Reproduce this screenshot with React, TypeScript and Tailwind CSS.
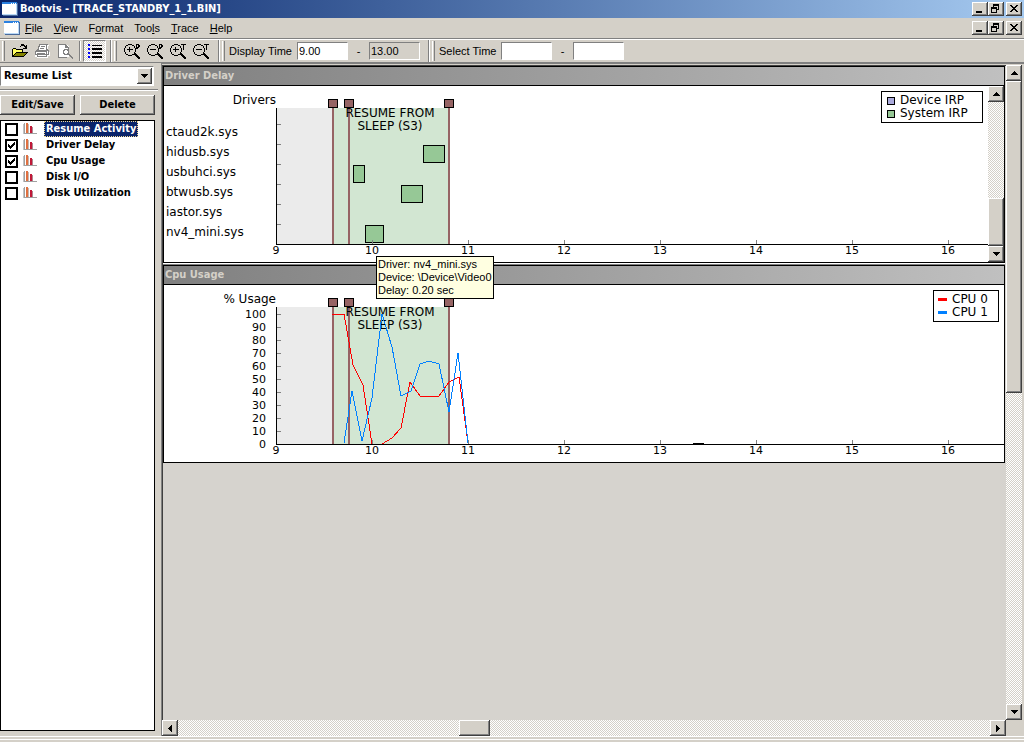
import React from "react";

const raised =
  "bg-[#d4d0c8] shadow-[inset_-1px_-1px_#404040,inset_1px_1px_#ffffff,inset_-2px_-2px_#808080]";
const dither =
  "bg-[conic-gradient(#ffffff_25%,#d4d0c8_0_50%,#ffffff_0_75%,#d4d0c8_0)] bg-[length:2px_2px]";
const chartFont = "font-['DejaVu_Sans',sans-serif]";

function WindowGlyph() {
  return (
    <svg width="16" height="14" shapeRendering="crispEdges" aria-hidden="true">
      <rect x="1" y="1" width="15" height="13" fill="#4a6a9a" />
      <rect x="0" y="0" width="15" height="13" fill="#b8d8f8" />
      <rect x="0" y="0" width="15" height="2" fill="#2a80e0" />
      <rect x="0" y="2" width="14" height="10" fill="#ffffff" />
      <path d="M9 1h1v1h-1zM11 1h1v1h-1zM13 1h1v1h-1z" fill="#ffffff" />
    </svg>
  );
}

function WindowButtons() {
  const cls = `flex h-[14px] w-4 items-center justify-center ${raised}`;
  return (
    <div className="ml-auto flex pr-[2px]">
      <button aria-label="Minimize" className={cls}>
        <svg width="16" height="14" shapeRendering="crispEdges"><path d="M4 9h6v2H4z" /></svg>
      </button>
      <button aria-label="Restore" className={cls}>
        <svg width="16" height="14" shapeRendering="crispEdges">
          <path d="M5 2h6v6h-2v-1h1v-3h-4v1h-1z" />
          <path fillRule="evenodd" d="M3 5h6v6h-6zM4 7v3h4v-3z" />
        </svg>
      </button>
      <button aria-label="Close" className={`ml-[2px] ${cls}`}>
        <svg width="16" height="14" shapeRendering="crispEdges">
          <path d="M4 3h2v1h1v1h2v-1h1v-1h2v1h-1v1h-1v1h-1v1h1v1h1v1h1v1h-2v-1h-1v-1h-2v1h-1v1h-2v-1h1v-1h1v-1h1v-1h-1v-1h-1v-1h-1z" />
        </svg>
      </button>
    </div>
  );
}

function Arrow({ dir }: { dir: "up" | "down" | "left" | "right" }) {
  const paths = {
    up: "M3 0h1v1h1v1h1v1h1v1H0v-1h1v-1h1v-1h1z",
    down: "M0 0h7v1h-1v1h-1v1h-1v1h-1v-1h-1v-1h-1v-1H0z",
    left: "M3 0h1v7h-1v-1h-1v-1h-1v-1H0v-1h1v-1h1v-1h1z",
    right: "M0 0h1v1h1v1h1v1h1v1h-1v1h-1v1h-1v1H0z",
  };
  const flat = dir === "up" || dir === "down";
  return (
    <svg width={flat ? 7 : 4} height={flat ? 4 : 7} shapeRendering="crispEdges" aria-hidden="true">
      <path d={paths[dir]} />
    </svg>
  );
}

function ScrollButton({ dir }: { dir: "up" | "down" | "left" | "right" }) {
  return (
    <button aria-label={`Scroll ${dir}`} className={`flex size-4 shrink-0 items-center justify-center ${raised}`}>
      <Arrow dir={dir} />
    </button>
  );
}

function Grip() {
  return <div className="h-5 w-[3px] shrink-0 border-l border-white border-r border-r-[#808080] bg-[#d4d0c8]" />;
}

function BandEdge() {
  return <div className="h-full w-[2px] shrink-0 border-l border-l-[#808080] border-r border-r-white" />;
}

function ZoomIcon({ sign, mark }: { sign: "+" | "-"; mark: "P" | "T" }) {
  return (
    <svg width="18" height="17" shapeRendering="crispEdges" aria-hidden="true">
      <path d="M4 1h4v1H4zM2 2h2v1H2zM8 2h2v1H8zM1 3h1v2H1zM10 3h1v2h-1zM0 5h1v4H0zM11 5h1v4h-1zM1 9h1v2H1zM10 9h1v2h-1zM2 11h2v1H2zM8 11h2v1H8zM4 12h4v1H4z" />
      <path d="M3 6h6v1H3z" />
      {sign === "+" && <path d="M5 4h1v5H5z" />}
      <path d="M10 10h1v1h1v1h1v1h1v1h1v1h1v1h-2v-1h-1v-1h-1v-1h-1v-1h-1z" />
      <path d="M11 10h1v1h1v1h1v1h1v1h1v2h-2v-1h-1v-1h-1v-1h-1z" />
      {mark === "P" ? (
        <path fillRule="evenodd" d="M12 1h3v1h1v2h-1v1h-1v1h-2zM13 2v2h1v-2z" />
      ) : (
        <path d="M11 1h5v1h-2v5h-1v-5h-2z" />
      )}
    </svg>
  );
}

function Toolbar() {
  const field =
    "h-[18px] w-[51px] border border-[#808080] border-r-white border-b-white px-[1px] text-[11px] leading-4 outline-none";
  return (
    <div className="flex h-[23px] items-center border-t border-white text-[11px]">
      <div className="ml-[2px] mr-[6px]"><Grip /></div>
      <button aria-label="Open" className="mr-[6px]">
        <svg width="17" height="16" shapeRendering="crispEdges">
          <path d="M10 1h3v1h1v1h1v-1h1v4h-4v-1h2v-1h-1v-1h-3v1h-1v-1h1z" />
          <path d="M2 5h3v1h7v3h5v1h-1v1h-1v1h-1v1h-1v1H1V6h1z" />
          <path d="M2 6h3v1h6v2H5v1H4v1H3v1H2z" fill="#ffff60" />
          <path d="M6 10h9v1h-1v1h-1v1H3v-1h1v-1h1v-1z" fill="#848400" />
        </svg>
      </button>
      <button aria-label="Print" disabled className="mr-[6px]">
        <svg width="17" height="16" shapeRendering="crispEdges">
          <path d="M6 2h9v1h-1v5h1v1h1v4h-2v2H3v-1H1V9h1V8h2V6h1V4h1z" fill="#fff" />
          <path
            fill="#808080"
            fillRule="evenodd"
            d="M5 1h9v1h-1v4h1v1h1v5h-2v2H3v-2H1V8h1V7h1V6h1V3h1zM6 2v2H5v3h7V2zM2 8v3h10V8zM4 12v1h8v-1zM13 8v3h1V8z"
          />
          <path fill="#808080" d="M7 3h4v1H7zM6 5h4v1H6zM2 8h10v1H2zM3 10h8v1H3z" />
        </svg>
      </button>
      <button aria-label="Print Preview" disabled className="mr-[4px]">
        <svg width="18" height="17" shapeRendering="crispEdges">
          <path d="M2 2h9v1h1v11H2z" fill="#fff" />
          <path fill="#808080" fillRule="evenodd" d="M1 1h8v1h1v1h1v1h1v3h-1V5H8V2H2v12h8v1H1z" />
          <path
            fill="#808080"
            fillRule="evenodd"
            d="M7 6h4v1h1v4h1v1h1v1h1v1h1v2h-1v-1h-1v-1h-1v-1h-1v-1H7v-1H6V7h1zM8 7v1H7v2h1v1h2v-1h1V8h-1V7z"
          />
        </svg>
      </button>
      <div className="mr-[2px] h-5 w-[2px] border-l border-l-[#808080] border-r border-r-white" />
      <button
        aria-label="List"
        aria-pressed="true"
        className={`flex h-[22px] w-[23px] items-center justify-center border border-[#808080] border-r-white border-b-white ${dither}`}
      >
        <svg width="16" height="15" shapeRendering="crispEdges">
          <path d="M1 0h2v2H1zM1 4h2v2H1zM1 8h2v2H1zM1 12h2v2H1z" fill="#0000ff" />
          <path d="M5 1h10v1H5zM5 4h10v2H5zM5 8h10v2H5zM5 12h10v2H5z" />
        </svg>
      </button>
      <div className="ml-1 h-full"><BandEdge /></div>
      <div className="ml-[2px] mr-[7px]"><Grip /></div>
      <div className="flex gap-[5px]">
        <button aria-label="Zoom in all"><ZoomIcon sign="+" mark="P" /></button>
        <button aria-label="Zoom out all"><ZoomIcon sign="-" mark="P" /></button>
        <button aria-label="Zoom in time"><ZoomIcon sign="+" mark="T" /></button>
        <button aria-label="Zoom out time"><ZoomIcon sign="-" mark="T" /></button>
      </div>
      <div className="ml-[7px] h-full"><BandEdge /></div>
      <div className="ml-[2px] mr-1"><Grip /></div>
      <label htmlFor="display-from" className="w-[68px] whitespace-nowrap">Display Time</label>
      <input id="display-from" defaultValue="9.00" className={`bg-white ${field}`} />
      <span className="w-[21px] text-center">-</span>
      <input aria-label="Display time end" readOnly defaultValue="13.00" className={`bg-[#d4d0c8] ${field}`} />
      <div className="ml-2 h-full"><BandEdge /></div>
      <div className="ml-[2px] mr-1"><Grip /></div>
      <label htmlFor="select-from" className="w-[62px] whitespace-nowrap">Select Time</label>
      <input id="select-from" className={`bg-white ${field}`} />
      <span className="w-[21px] text-center">-</span>
      <input aria-label="Select time end" className={`bg-white ${field}`} />
    </div>
  );
}

function BarsIcon() {
  return (
    <svg width="14" height="12" shapeRendering="crispEdges" aria-hidden="true">
      <path d="M0 1h1v10H0z" fill="#c4c4c4" />
      <path d="M1 0h1v11h-1z" fill="#a0a0a0" />
      <path d="M1 10h13v1H1z" fill="#a0a0a0" />
      <path d="M3 0h2v10H3z" fill="#e07040" />
      <path d="M5 1h1v9H5z" fill="#c8b8b0" />
      <path d="M7 3h2v7H7z" fill="#c01838" />
      <path d="M9 4h1v6H9z" fill="#b08890" />
    </svg>
  );
}

const traces = [
  { name: "Resume Activity", on: false, selected: true },
  { name: "Driver Delay", on: true, selected: false },
  { name: "Cpu Usage", on: true, selected: false },
  { name: "Disk I/O", on: false, selected: false },
  { name: "Disk Utilization", on: false, selected: false },
];

function Sidebar() {
  return (
    <aside className="flex w-[161px] shrink-0 flex-col pb-[5px] pr-[6px] pt-[3px] text-[11px] font-bold">
      <div className="relative h-5 w-[154px] border border-[#808080] border-r-white border-b-white bg-white">
        <select aria-label="List" className="h-[18px] w-full appearance-none bg-white pl-[3px] font-bold leading-[18px] outline-none">
          <option>Resume List</option>
        </select>
        <span className={`pointer-events-none absolute right-[1px] top-[1px] flex h-4 w-[15px] items-center justify-center ${raised}`}>
          <Arrow dir="down" />
        </span>
      </div>
      <div className="mt-[3px] h-[2px] w-[158px] border-b border-t border-b-white border-t-[#808080]" />
      <div className="mt-1 flex gap-[5px]">
        <button className={`h-5 w-[75px] ${raised}`}>Edit/Save</button>
        <button className={`h-5 flex-1 ${raised}`}>Delete</button>
      </div>
      <ul className="mt-[5px] flex-1 border border-black bg-white">
        {traces.map((t) => (
          <li key={t.name}>
            <label className="flex h-4 items-center pl-1">
              <span className="grid size-[13px] place-items-center">
                <input type="checkbox" defaultChecked={t.on} className="peer col-start-1 row-start-1 size-[13px] appearance-none border-2 border-black bg-white" />
                <svg width="7" height="7" shapeRendering="crispEdges" className="pointer-events-none invisible col-start-1 row-start-1 peer-checked:visible">
                  <path d="M0 2h1v1h1v1h1v-1h1v-1h1v-1h1v-1h1v3h-1v1h-1v1h-1v1h-1v1h-1v-1h-1v-1H0z" />
                </svg>
              </span>
              <span className="ml-[5px] mr-[7px]"><BarsIcon /></span>
              <span
                className={
                  t.selected
                    ? "h-4 border border-dotted border-[#f5db95] bg-[#0a246a] px-[1px] leading-[14px] text-white"
                    : "h-4 border border-transparent px-[1px] leading-[14px]"
                }
              >
                {t.name}
              </span>
            </label>
          </li>
        ))}
      </ul>
    </aside>
  );
}

const hours = [9, 10, 11, 12, 13, 14, 15, 16];
const markers = [169, 185, 285];

/* Phase bands, markers and time axis; x = 112 is second 9, at 96 px a second. */
function Phases({ top, base }: { top: number; base: number }) {
  return (
    <>
      <rect x="113" y={top} width="56" height={base - top} fill="#ebebeb" />
      <rect x="169" y={top} width="116" height={base - top} fill="#d2e6d2" />
      {markers.map((x) => (
        <g key={x}>
          <rect x={x - 1} y={top} width="2" height={base - top} fill="#966464" />
          <rect x={x - 5} y={top - 9} width="10" height="9" fill="#000" />
          <rect x={x - 4} y={top - 8} width="8" height="7" fill="#966464" />
        </g>
      ))}
      <g className="text-[12px]">
        <text x="226" y={top + 9} textAnchor="middle">RESUME FROM</text>
        <text x="226" y={top + 22} textAnchor="middle">SLEEP (S3)</text>
      </g>
    </>
  );
}

function Axes({ top, base }: { top: number; base: number }) {
  return (
    <>
      {hours.map((h, i) => (
        <g key={h}>
          <rect x={112 + i * 96} y={base - 4} width="1" height="4" fill="#808080" />
          <text x={112 + i * 96} y={base + 10} textAnchor="middle">{h}</text>
        </g>
      ))}
      <rect x="112" y={top} width="1" height={base - top} />
      <rect x="112" y={base} width="100%" height="1" />
    </>
  );
}

const drivers = ["ctaud2k.sys", "hidusb.sys", "usbuhci.sys", "btwusb.sys", "iastor.sys", "nv4_mini.sys"];
const delays = [
  { x: 259, y: 59, w: 22 },
  { x: 189, y: 79, w: 12 },
  { x: 237, y: 99, w: 22 },
  { x: 201, y: 139, w: 19 },
];

function DriverChart() {
  return (
    <svg width="100%" height="176" shapeRendering="crispEdges" className={`block text-[11px] ${chartFont}`} role="img" aria-label="Driver Delay">
      <Phases top={22} base={158} />
      <text x="112" y="18" textAnchor="end" className="text-[12px]">Drivers</text>
      {drivers.map((d, i) => (
        <g key={d}>
          <text x="2" y={50 + i * 20} className="text-[12px]">{d}</text>
          <rect x="113" y={38 + i * 20} width="4" height="1" fill="#808080" />
        </g>
      ))}
      {delays.map((d) => (
        <g key={d.x}>
          <rect x={d.x} y={d.y} width={d.w} height="18" />
          <rect x={d.x + 1} y={d.y + 1} width={d.w - 2} height="16" fill="#96c896" />
        </g>
      ))}
      <Axes top={22} base={158} />
    </svg>
  );
}

const percents = [100, 90, 80, 70, 60, 50, 40, 30, 20, 10, 0];

function CpuChart() {
  return (
    <svg width="100%" height="177" shapeRendering="crispEdges" className={`block text-[11px] ${chartFont}`} role="img" aria-label="Cpu Usage">
      <Phases top={22} base={159} />
      <text x="112" y="18" textAnchor="end" className="text-[12px]">% Usage</text>
      {percents.map((p, i) => (
        <g key={p}>
          <text x="102" y={33 + i * 13} textAnchor="end">{p}</text>
          <rect x="113" y={29 + i * 13} width="4" height="1" fill="#808080" />
        </g>
      ))}
      <Axes top={22} base={159} />
      <polyline
        fill="none"
        stroke="#ff0000"
        points="168,29 180,29 189,80 199,100 208,159"
      />
      <polyline
        fill="none"
        stroke="#ff0000"
        points="218,159 228,153 237,143 246,97 256,111 275,111 285,97 295,92 304,158"
      />
      <polyline
        fill="none"
        stroke="#0080ff"
        points="180,158 188,106 198,156 208,113 218,29 228,62 237,111 247,106 256,79 265,76 275,79 285,127 294,68 304,158"
      />
      <rect x="529" y="158" width="11" height="1" />
    </svg>
  );
}

function Panel({ title, children }: { title: string; children: React.ReactNode }) {
  return (
    <section className="border border-black bg-white">
      <h2 className="h-[19px] border-b border-black bg-linear-to-r from-[#808080] to-[#c0c0c0] pl-[1px] text-[11px] font-bold leading-[18px] text-[#d4d0c8]">
        {title}
      </h2>
      {children}
    </section>
  );
}

export default function App() {
  const legend = `absolute border border-black bg-white py-[2px] text-[12px] leading-[13px] ${chartFont}`;
  return (
    <div className="flex h-screen flex-col overflow-hidden bg-[#d4d0c8] font-['DejaVu_Sans_Condensed','DejaVu_Sans',sans-serif] text-[11px] text-black">
      <header className="flex h-[18px] shrink-0 items-center bg-linear-to-r from-[#0a246a] to-[#a6caf0] pl-[2px]">
        <WindowGlyph />
        <h1 className="ml-[2px] text-[11px] font-bold text-white">Bootvis - [TRACE_STANDBY_1_1.BIN]</h1>
        <WindowButtons />
      </header>
      <nav className="flex h-[21px] shrink-0 items-center border-b border-[#808080] pl-1 font-['Liberation_Sans',sans-serif]">
        <WindowGlyph />
        <div className="ml-[5px] flex gap-[11px]">
          <button><u>F</u>ile</button>
          <button><u>V</u>iew</button>
          <button>F<u>o</u>rmat</button>
          <button>Too<u>l</u>s</button>
          <button><u>T</u>race</button>
          <button><u>H</u>elp</button>
        </div>
        <WindowButtons />
      </nav>
      <div className="shrink-0 font-['Liberation_Sans',sans-serif]"><Toolbar /></div>
      <main className="flex min-h-0 flex-1 border-t border-[#808080]">
        <Sidebar />
        <div className="flex min-w-0 flex-1 flex-col border-l border-t border-[#808080] pr-[2px] pt-px">
          <div className="flex min-h-0 flex-1">
            <div className="relative min-w-0 flex-1 border-l border-t border-[#404040] bg-[#d6d3ce] pr-px">
              <Panel title="Driver Delay">
                <div className="flex">
                  <div className="relative min-w-0 flex-1 overflow-hidden">
                    <DriverChart />
                    <ul className={`right-[5px] top-[5px] w-[102px] pl-[5px] ${legend}`}>
                      <li className="flex items-center gap-[5px]">
                        <span className="size-2 border border-black bg-[#aaaadc]" />Device IRP
                      </li>
                      <li className="flex items-center gap-[5px]">
                        <span className="size-2 border border-black bg-[#96c896]" />System IRP
                      </li>
                    </ul>
                  </div>
                  <div className={`flex w-4 flex-col ${dither}`}>
                    <ScrollButton dir="up" />
                    <div className="flex-1" />
                    <div className={`h-12 ${raised}`} />
                    <ScrollButton dir="down" />
                  </div>
                </div>
              </Panel>
              <div className="h-[2px] border-b border-t border-b-[#808080] border-t-white" />
              <Panel title="Cpu Usage">
                <div className="relative overflow-hidden">
                  <CpuChart />
                  <ul className={`right-[5px] top-[5px] w-[66px] pl-1 ${legend}`}>
                    <li className="flex items-center gap-[5px]"><span className="h-[3px] w-[9px] bg-[#ff0000]" />CPU 0</li>
                    <li className="flex items-center gap-[5px]"><span className="h-[3px] w-[9px] bg-[#0080ff]" />CPU 1</li>
                  </ul>
                </div>
              </Panel>
              <div
                role="tooltip"
                className="absolute left-[213px] top-[190px] whitespace-nowrap border border-black bg-[#ffffe1] px-[1px] py-px font-['Liberation_Sans',sans-serif] leading-[13px]"
              >
                <p>Driver: nv4_mini.sys</p>
                <p>Device: \Device\Video0</p>
                <p>Delay: 0.20 sec</p>
              </div>
            </div>
            <div className={`flex w-4 shrink-0 flex-col ${dither}`}>
              <ScrollButton dir="up" />
              <div className={`h-[312px] ${raised}`} />
              <div className="flex-1" />
              <ScrollButton dir="down" />
            </div>
          </div>
          <div className="flex h-4 shrink-0">
            <div className={`flex flex-1 items-stretch ${dither}`}>
              <ScrollButton dir="left" />
              <div className="flex-[281]" />
              <div className={`w-[31px] ${raised}`} />
              <div className="flex-[500]" />
              <ScrollButton dir="right" />
            </div>
            <div className="w-4" />
          </div>
        </div>
      </main>
      <footer className="h-[6px] shrink-0 border-t border-white pt-px"><div className="h-[2px] border-b border-white" /></footer>
    </div>
  );
}
